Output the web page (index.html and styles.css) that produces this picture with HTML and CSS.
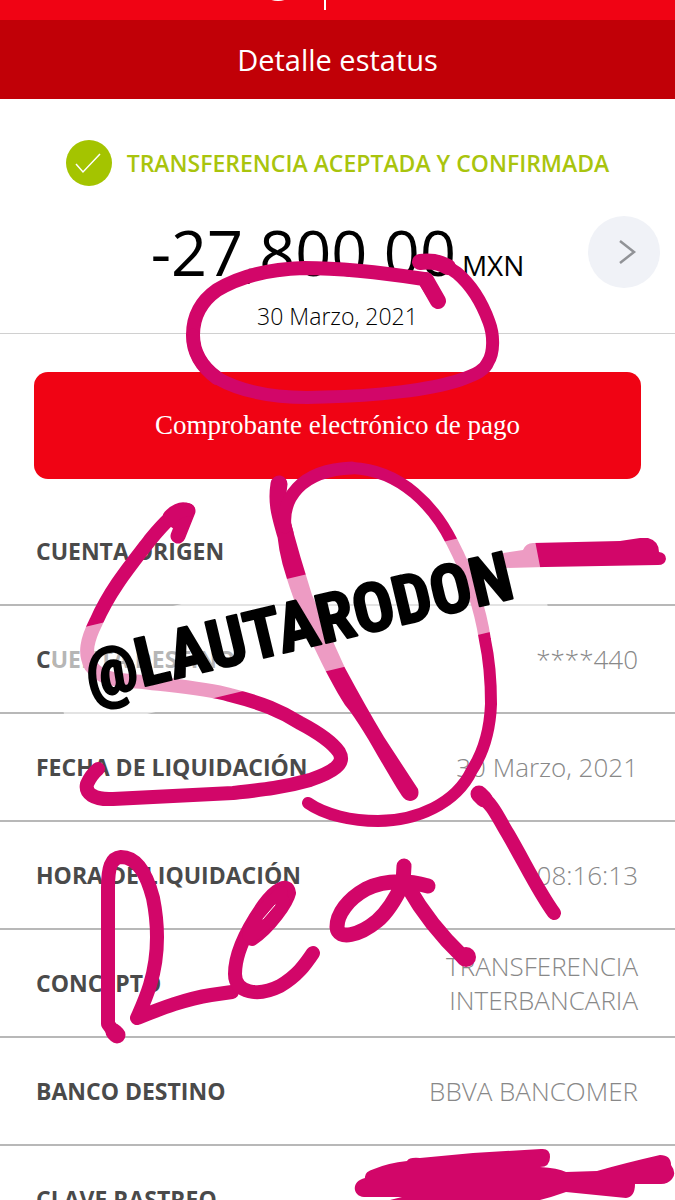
FILE: index.html
```html
<!DOCTYPE html>
<html lang="es">
<head>
<meta charset="utf-8">
<meta name="viewport" content="width=device-width, initial-scale=1">
<title>Detalle estatus</title>
<link rel="stylesheet" href="styles.css">
</head>
<body>
<main class="screen">
  <div class="brand">
    <svg class="brand-mark" viewBox="0 0 80 20" aria-hidden="true">
      <path d="M26 -8a14 9 0 0 0 28 0z" fill="#fff"/>
      <path d="M87 0v10" stroke="#fff" stroke-width="2"/>
    </svg>
  </div>
  <header class="title-bar"><h1 class="title">Detalle estatus</h1></header>

  <section class="summary">
    <p class="status">
      <svg class="status-icon" viewBox="0 0 46 46" aria-hidden="true">
        <circle cx="23" cy="23" r="23" fill="#a4c400"/>
        <path d="M10 24l7 8L34 14" fill="none" stroke="#fff" stroke-width="1.5"/>
      </svg>
      <span>TRANSFERENCIA ACEPTADA Y CONFIRMADA</span>
    </p>
    <div class="amount-row">
      <p class="amount"><span class="figure">-27,800.00</span><span class="currency">MXN</span></p>
      <button class="next" type="button" aria-label="Siguiente">
        <svg class="next-icon" viewBox="0 0 20 28" aria-hidden="true"><path d="M3 3l14 11L3 25" fill="none" stroke="#919397" stroke-width="2.5"/></svg>
      </button>
    </div>
    <p class="date">30 Marzo, 2021</p>
  </section>

  <div class="action"><button class="receipt" type="button">Comprobante electrónico de pago</button></div>

  <table class="details">
    <tbody>
      <tr><th scope="row">CUENTA ORIGEN</th><td></td></tr>
      <tr><th scope="row">CUENTA DESTINO</th><td>****440</td></tr>
      <tr><th scope="row">FECHA DE LIQUIDACIÓN</th><td>30 Marzo, 2021</td></tr>
      <tr><th scope="row">HORA DE LIQUIDACIÓN</th><td>08:16:13</td></tr>
      <tr><th scope="row">CONCEPTO</th><td>TRANSFERENCIA<br>INTERBANCARIA</td></tr>
      <tr><th scope="row">BANCO DESTINO</th><td>BBVA BANCOMER</td></tr>
      <tr><th scope="row">CLAVE RASTREO</th><td></td></tr>
    </tbody>
  </table>

  <svg class="markup" viewBox="0 0 675 1200" role="img" aria-label="Anotaciones">
    <g class="ink">
      <!-- ring round the date -->
      <path stroke-width="14" d="M438 301L424 279C385 273 345 268 304 268C270 269 240 276 217 290C200 302 193 318 193 335C193 353 202 367 217 378"/>
      <path stroke-width="13" d="M193 335C193 353 202 367 217 378C245 394 285 399 325 397C375 396 430 390 460 380C477 374 485 370 488 362C494 353 494 335 489 322C481 300 470 284 457 273C445 264 433 260 420 262"/>
      <path stroke-width="16" d="M420 262Q436 260 448 267M438 301L426 280"/>
      <!-- S -->
      <path stroke-width="15" d="M178 536L188 511Q180 507 170 517L180 524"/>
      <path stroke-width="14" d="M188 510C178 508 164 523 150 540C130 566 110 590 96 622C87 640 84 653 91 666C101 680 119 680 143 682C175 686 205 688 230 695C262 703 281 711 300 723C319 733 332 742 339 752C346 764 333 772 310 780C282 788 260 790 233 793L113 799C93 800 85 793 87 784Q91 775 98 769"/>
      <!-- D -->
      <path stroke-width="17" d="M279 484C276 503 280 515 285 533"/>
      <path class="ink-fill" d="M275 515L290 520Q300 557 312 595L345 668Q366 707 384 737L418 789Q420 797 414 800Q407 803 402 796C380 762 364 728 345 705C326 675 300 621 287 579Q276 546 277 520z"/>
      <path stroke-width="13" d="M285 527C282 500 299 470 352 468"/>
      <path stroke-width="12" d="M352 468C402 470 435 508 452 542C468 573 480 606 485 640C490 663 491 685 491 704C490 730 483 753 472 770C456 804 416 821 378 821C352 821 325 815 308 803"/>
      <path stroke-width="14" d="M479 794C494 805 499 820 508 834C526 865 538 891 554 913"/>
      <path stroke-width="17" d="M479 794L484 799"/>
      <!-- word -->
      <path stroke-width="14" d="M116 1035L108 1024V888C108 867 111 858 121 857C137 857 147 875 153 898C160 933 157 962 150 985C145 1001 140 1011 137 1018C160 1009 185 999 211 995L232 992"/>
      <path stroke-width="17" d="M114 1032L117 1035"/>
      <path stroke-width="14" d="M252 939C270 927 287 902 289 893C288 882 275 890 264 905C247 929 235 954 235 974C235 993 258 997 280 986C297 976 305 965 313 953"/>
      <path stroke-width="12" d="M248 935Q257 912 282 892M251 938Q273 920 284 901"/>
      <path stroke="#fff" class="gap" d="M263 919L275 905"/>
      <path stroke-width="15" d="M428 886C406 880 385 880 366 889C348 899 337 914 337 927C338 941 360 935 377 921C389 911 397 896 403 883L404 866M408 887C421 910 439 934 463 957"/>
      <circle class="ink-fill" cx="466" cy="957" r="10"/>
      <!-- covered values -->
      <path class="ink-fill" d="M503 553L523 550Q526 543 533 543L620 541L640 538H648Q659 541 659 552Q666 553 666 559Q665 565 658 565L545 567L503 568z"/>
      <path class="ink-fill" d="M364 1197C352 1196 351 1181 365 1178Q364 1172 374 1169Q388 1163 407 1161Q409 1157 420 1158L473 1153L541 1149Q550 1148 550 1157Q550 1167 540 1167Q558 1168 566 1172L597 1171Q625 1163 660 1155Q671 1155 671 1165Q677 1173 672 1179Q668 1184 661 1184H635Q635 1197 626 1198L566 1192Q552 1197 540 1200H390L402 1197z"/>
    </g>
    <path class="veil" d="M51 635L527 522Q531 521 532 525L549 613Q550 618 545 619L72 732Q68 732 67 728L48 640Q47 636 51 635z"/>
    <text class="handle" transform="translate(91 699) rotate(-13.4)">@LAUTARODON</text>
  </svg>
</main>
</body>
</html>
```
FILE: styles.css
```css
* { box-sizing: border-box; }

body {
  margin: 0;
  background: #fff;
  font-family: "Open Sans", "Noto Sans", sans-serif;
}

h1, p { margin: 0; }
button { border: 0; padding: 0; }

.screen {
  position: relative;
  height: 100vh;
  overflow: hidden;
}

.brand {
  height: 20px;
  background: #f00314;
  display: flex;
  justify-content: center;
}
.brand-mark { width: 80px; height: 20px; overflow: visible; margin-right: 120px; }

.title-bar {
  height: 79px;
  background: #c10007;
  display: flex;
  align-items: center;
  justify-content: center;
}
.title { color: #fff; font-size: 29px; font-weight: 400; line-height: 40px; }

.summary {
  padding-top: 41px;
  border-bottom: 1px solid #d0d0d0;
}
.status {
  display: flex;
  align-items: center;
  justify-content: center;
  gap: 15px;
  color: #a9c40d;
  font-size: 23px;
  font-weight: 600;
  line-height: 46px;
}
.status-icon { width: 46px; height: 46px; }

.amount-row {
  display: grid;
  grid-template-columns: 87px 1fr 87px;
  align-items: center;
  margin-top: 22px;
}
.amount {
  grid-column: 2;
  display: flex;
  align-items: baseline;
  justify-content: center;
  gap: 6px;
  white-space: nowrap;
}
.figure { font-size: 63px; line-height: 88px; }
.currency { font-size: 28px; line-height: 32px; }
.next {
  width: 72px;
  height: 72px;
  border-radius: 50%;
  background: #f0f2f7;
  display: flex;
  align-items: center;
  justify-content: center;
}
.next-icon { width: 20px; height: 28px; margin-left: 5px; }

.date {
  padding-top: 3px;
  text-align: center;
  font-size: 23px;
  font-weight: 300;
  line-height: 34px;
}

.action { padding: 38px 34px 18px; }
.receipt {
  display: block;
  width: 100%;
  height: 107px;
  border-radius: 14px;
  background: #f00314;
  color: #fff;
  font-family: "Liberation Serif", serif;
  font-size: 27px;
}

.details { width: 100%; border-collapse: collapse; }
.details tr { height: 108px; border-bottom: 2px solid #b8b8b8; }
.details th {
  padding: 0 0 0 36px;
  text-align: left;
  color: #4a4a4a;
  font-size: 23px;
  font-weight: 700;
}
.details td {
  padding: 0 37px 0 0;
  text-align: right;
  color: #888;
  font-size: 26px;
  font-weight: 300;
  line-height: 34px;
}

.markup {
  position: absolute;
  top: 0;
  left: 0;
  width: 100%;
  pointer-events: none;
}
.ink path { fill: none; stroke: #d20669; stroke-linecap: round; stroke-linejoin: round; }
.ink .ink-fill { fill: #d20669; stroke: none; }
.ink .gap { stroke: #fff; stroke-width: 1px; }
.veil { fill: #fff; fill-opacity: 0.6; }
.handle {
  font-family: "Roboto Condensed", "Liberation Sans Narrow", "Liberation Sans", sans-serif;
  font-size: 68px;
  font-weight: 700;
  stroke: #000;
  stroke-width: 2px;
  stroke-linejoin: round;
}
```
